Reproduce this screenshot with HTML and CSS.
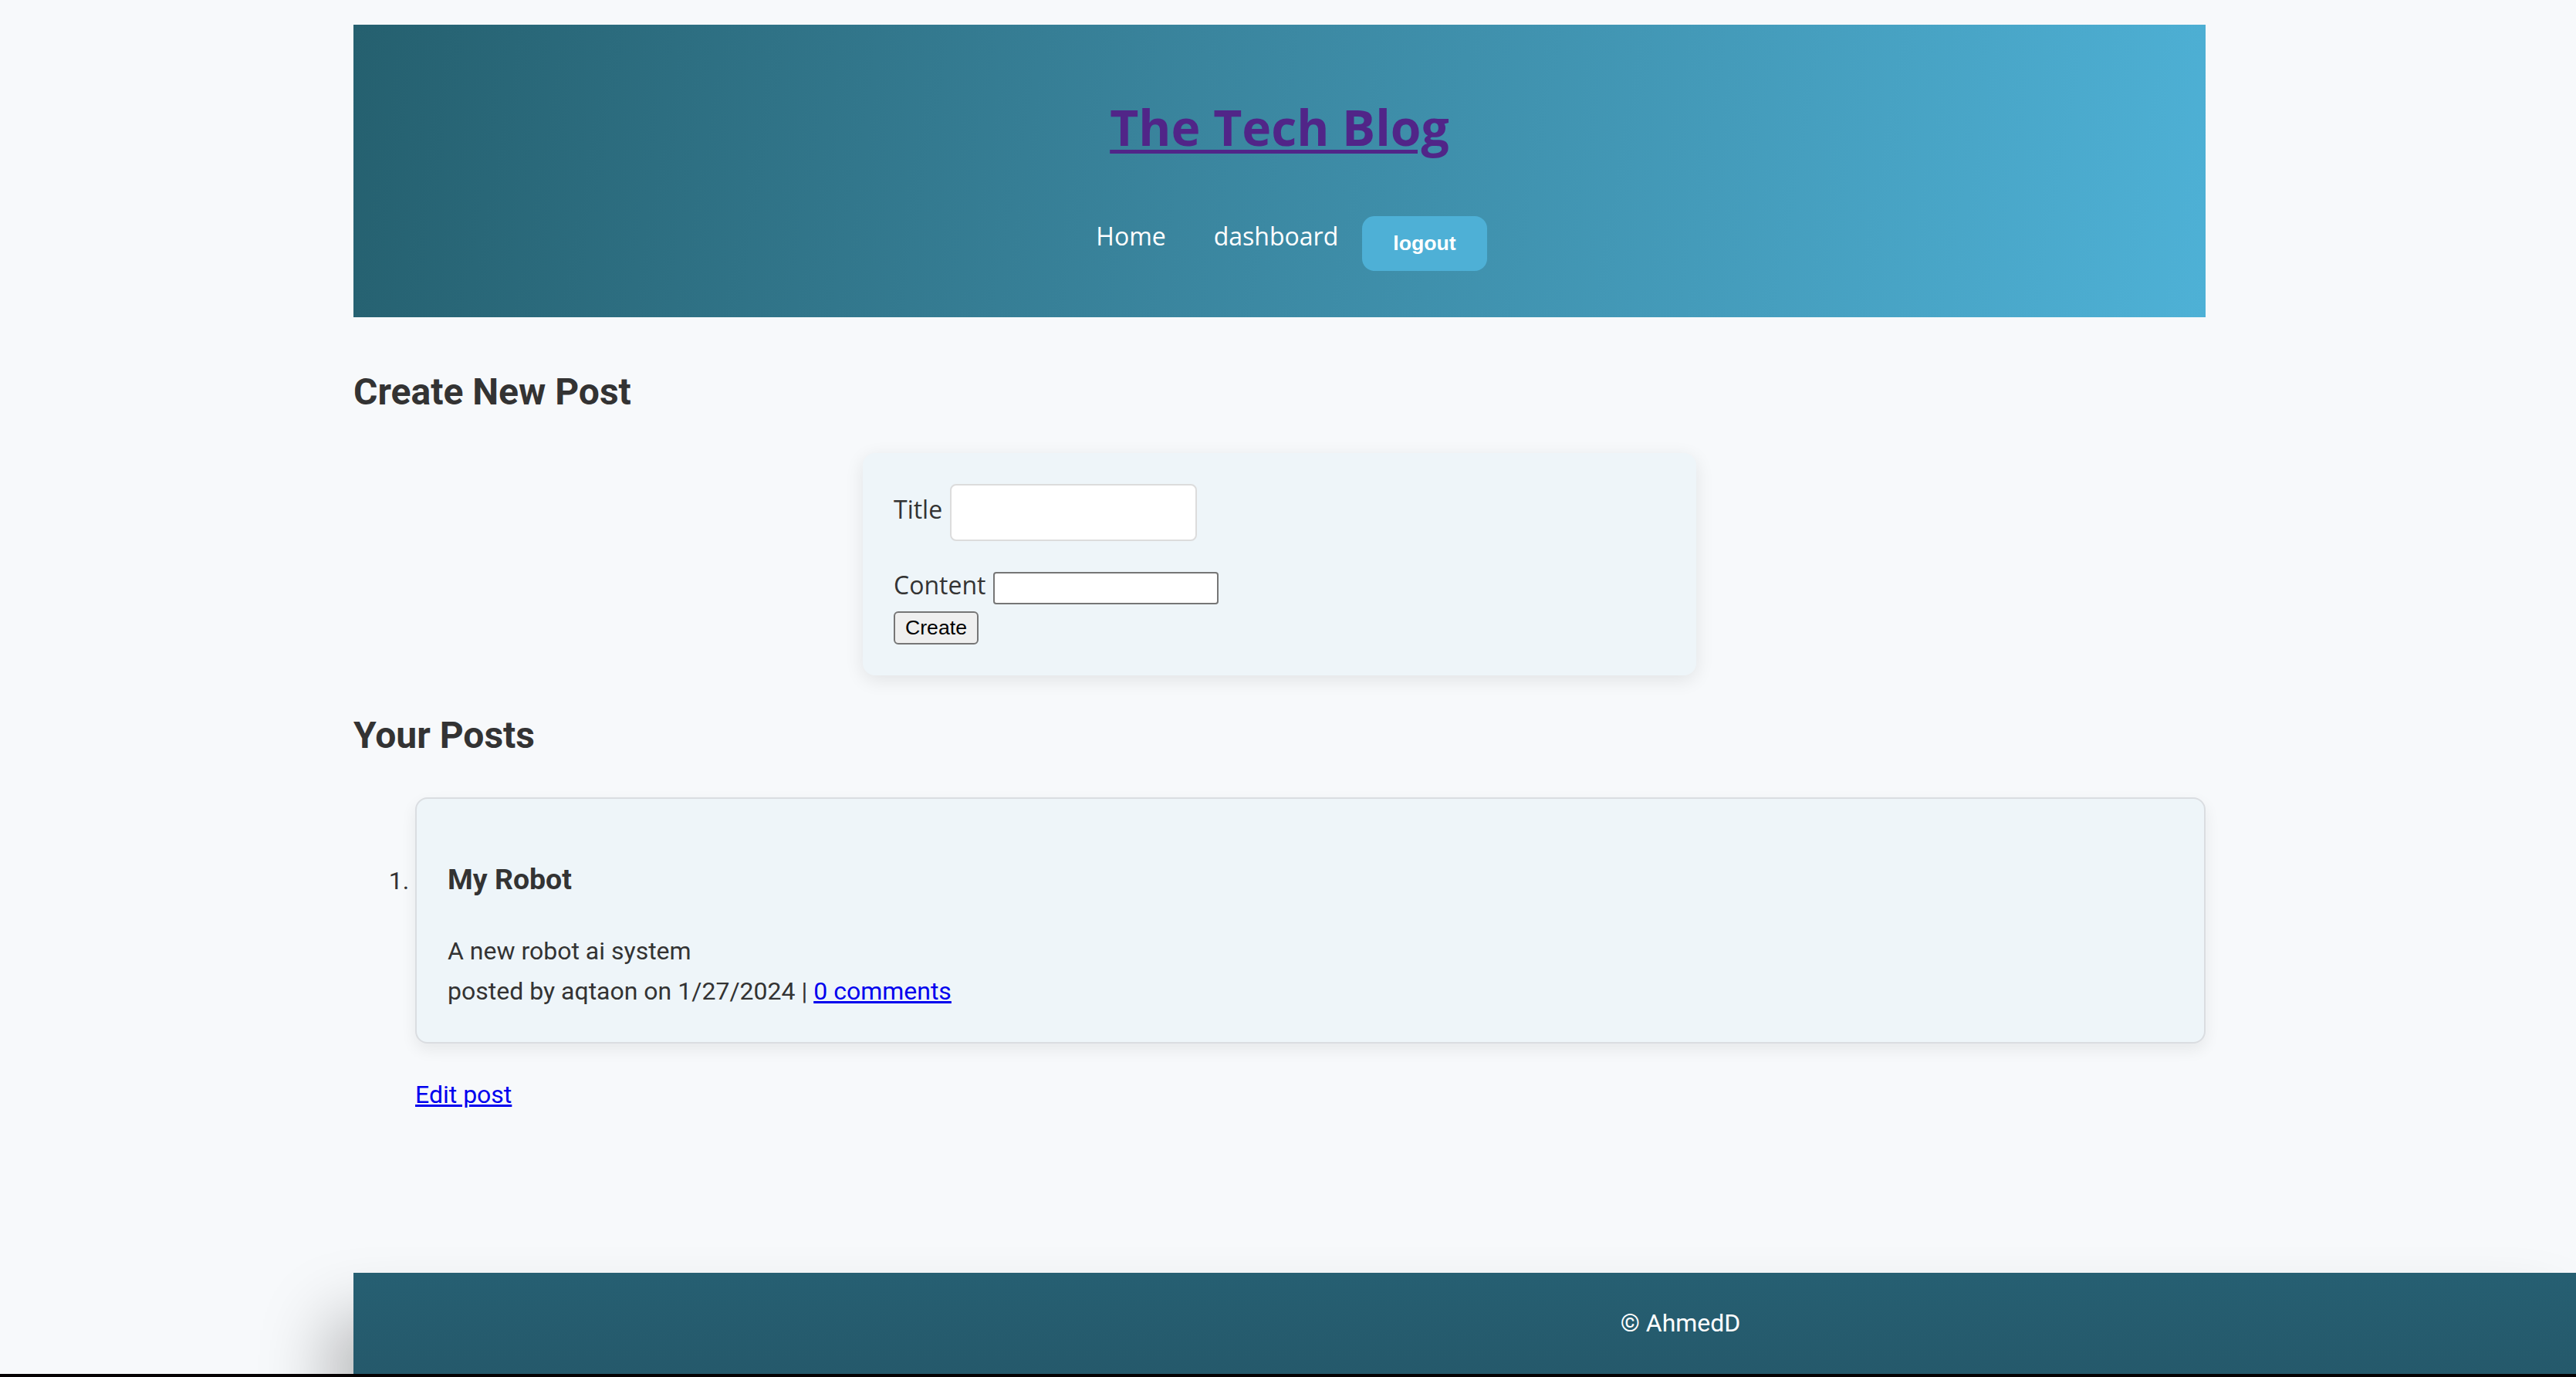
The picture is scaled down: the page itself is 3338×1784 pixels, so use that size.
FILE: index.html
```html
<!DOCTYPE html>
<html lang="en">
<head>
<meta charset="utf-8">
<title>The Tech Blog - Dashboard</title>
<link rel="stylesheet" href="styles.css">
</head>
<body>
<div class="page">
  <header class="site-header">
    <h1 class="site-title"><a href="#">The Tech Blog</a></h1>
    <nav class="site-nav">
      <a class="nav-link" href="#">Home</a>
      <a class="nav-link" href="#">dashboard</a>
      <button class="logout-btn" type="button">logout</button>
    </nav>
  </header>
  <main class="main">
    <h2 class="section-title">Create New Post</h2>
    <form class="new-post-form">
      <div class="form-row title-row">
        <label class="form-label" for="title">Title</label>
        <input class="title-input" id="title" type="text">
      </div>
      <div class="form-row content-row">
        <label class="form-label" for="content">Content</label>
        <input class="content-input" id="content" type="text">
      </div>
      <button class="create-btn" type="button">Create</button>
    </form>
    <h2 class="section-title posts-title">Your Posts</h2>
    <ol class="post-list">
      <li class="post-item">
        <div class="post-card">
          <h3 class="post-title">My Robot</h3>
          <p class="post-text">A new robot ai system</p>
          <p class="post-text">posted by aqtaon on 1/27/2024 | <a href="#">0 comments</a></p>
        </div>
        <p class="edit-link"><a href="#">Edit post</a></p>
      </li>
    </ol>
  </main>
</div>
<footer class="site-footer">© AhmedD</footer>
<div class="window-edge"></div>
</body>
</html>
```
FILE: styles.css
```css
html, body {
  margin: 0;
  padding: 0;
}
body {
  height: 1784px;
  overflow: hidden;
  display: flex;
  flex-direction: column;
  background: #f7f9fb;
  font-family: Roboto, "Liberation Sans", sans-serif;
  color: #333;
}
.page {
  flex: none;
  width: 2400px;
  margin-left: 458px;
  padding-top: 32px;
}

/* Header */
.site-header {
  display: flex;
  flex-direction: column;
  align-items: center;
  padding: 87px 0 60px;
  background: linear-gradient(100deg, #25606f 0%, #3a859e 45%, #4eb1d6 100%);
}
.site-title {
  margin: 0;
  font-family: "Open Sans", sans-serif;
  font-weight: 700;
  font-size: 64.2px;
  line-height: 90px;
}
.site-title a {
  color: #512588;
  text-decoration: underline;
  text-decoration-thickness: 5px;
  text-underline-offset: 5px;
}
.site-nav {
  display: flex;
  align-items: flex-start;
  margin-top: 71px;
}
.nav-link {
  padding: 0 31px;
  font-family: "Open Sans", sans-serif;
  font-size: 32px;
  line-height: 51.2px;
  color: #fff;
  text-decoration: none;
}
.logout-btn {
  height: 71px;
  padding: 0 40px;
  border: none;
  border-radius: 16px;
  background: #4eb0d6;
  color: #fff;
  font-family: "Liberation Sans", Arial, sans-serif;
  font-weight: 700;
  font-size: 26.67px;
  line-height: 31px;
}

/* Sections */
.section-title {
  margin: 59px 0 40px;
  font-family: Roboto, sans-serif;
  font-weight: 700;
  font-size: 48px;
  line-height: 76.8px;
  color: #333;
}
.posts-title {
  margin: 40px 0 41px;
}

/* Form */
.new-post-form {
  box-sizing: border-box;
  width: 1080px;
  margin: 0 auto;
  padding: 40px;
  background: #eef5f9;
  border-radius: 16px;
  box-shadow: 0 6px 24px rgba(0, 0, 0, 0.09);
}
.form-row {
  display: flex;
  align-items: center;
  gap: 10px;
}
.title-row {
  margin-bottom: 40px;
}
.form-label {
  font-family: "Open Sans", sans-serif;
  font-size: 32px;
  line-height: 30px;
  margin-bottom: 7px;
  color: #333;
}
.title-input {
  box-sizing: border-box;
  width: 320px;
  height: 74px;
  border: 2px solid #dcdcdc;
  border-radius: 8px;
  background: #fff;
}
.content-input {
  box-sizing: border-box;
  width: 292px;
  height: 42px;
  border: 2px solid #767676;
  border-radius: 4px;
  background: #fff;
}
.create-btn {
  display: block;
  box-sizing: border-box;
  width: 110px;
  height: 43px;
  margin-top: 9px;
  padding: 0;
  border: 2px solid #767676;
  border-radius: 6px;
  background: #efefef;
  color: #000;
  font-family: "Liberation Sans", Arial, sans-serif;
  font-size: 26.67px;
}

/* Posts */
.post-list {
  margin: 0;
  padding-left: 80px;
  font-size: 32px;
  line-height: 1.6;
  color: #333;
}
.post-card {
  padding: 38px 40px 40px;
  border: 2px solid #dadde1;
  border-radius: 16px;
  background: #eef5f9;
  box-shadow: 0 8px 20px rgba(0, 0, 0, 0.07);
}
.post-title {
  margin: 37.44px 0;
  font-size: 37.44px;
  font-weight: 700;
  line-height: 1.6;
}
.post-text {
  margin: 0;
}
.post-text a,
.edit-link a {
  color: #0000ee;
}
.edit-link {
  margin: 41px 0 0;
}

/* Footer */
.site-footer {
  flex: none;
  box-sizing: border-box;
  margin-top: auto;
  margin-left: 458px;
  padding: 40px 0 40px 559px;
  font-size: 32px;
  line-height: 51.2px;
  text-align: center;
  color: #fff;
  background: linear-gradient(180deg, #265f72 0%, #25596b 100%);
  box-shadow: -30px 60px 90px rgba(0, 0, 0, 0.28);
}
.window-edge {
  flex: none;
  height: 4px;
  background: #050203;
}
```
